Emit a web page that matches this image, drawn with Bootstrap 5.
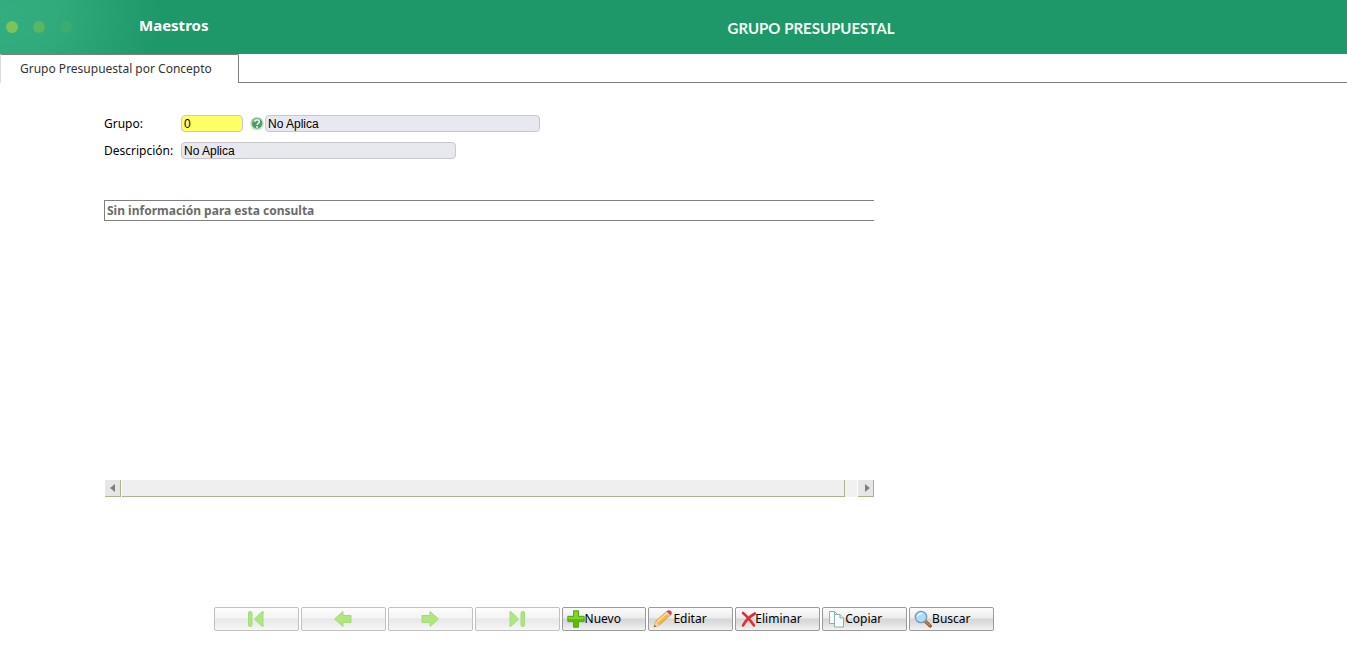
<!DOCTYPE html>
<html lang="es">
<head>
<meta charset="utf-8">
<meta name="viewport" content="width=device-width, initial-scale=1">
<title>Grupo Presupuestal</title>
<link href="https://cdn.jsdelivr.net/npm/bootstrap@5.3.0/dist/css/bootstrap.min.css" rel="stylesheet">
<style>
  body { font-family: "Noto Sans", sans-serif; font-size: 12px; line-height: 16px; color: #000; background: #fff; }
  .app-header { height: 54px; background: radial-gradient(ellipse 160px 110px at 0 16px, #34ae80 0, #30a97b 40%, #1e9868 100%) #1e9868; color: #fff; }
  .dots { width: 139px; gap: 15px; padding-left: 6px; }
  .dots span { width: 12px; height: 12px; border-radius: 50%; background: #7cc35a; }
  .dots span:nth-child(2) { background: #58b665; }
  .dots span:nth-child(3) { background: #3cac70; }
  .module-name { font-size: 15px; line-height: 20px; font-weight: 700; width: 136px; margin: 0 0 4px; }
  .page-title { font-family: Lato, sans-serif; font-size: 15px; line-height: 20px; font-weight: 700; margin: 2px 0 0; color: #f4fcf7; }
  .page-tabs { height: 29px; border-bottom: 1px solid #808080; }
  .page-tabs .nav-link { height: 29px; width: 239px; padding: 0 0 0 19px; border: 1px solid #808080; border-left-color: #ddd; border-bottom: 0; border-radius: 0 2px 0 0; background: #fff; color: #333; font-size: 12px; line-height: 16px; text-align: left; white-space: nowrap; }
  .workspace { padding: 32px 0 0 104px; }
  .field-label { width: 77px; font-size: 12px; }
  .field-row { height: 17px; }
  .field { height: 17px; padding: 0 2px; border: 1px solid #c8c8c8; border-radius: 4px; background: #e8e8f1; color: #000; font: 12px/15px "Liberation Sans", sans-serif; }
  .field-code { width: 62px; background: #ffff66; }
  .field-text { width: 275px; }
  .help-btn { width: 14px; height: 15px; margin: 0 1px 0 7px; }
  .result-panel { max-width: 770px; height: 297px; margin-top: 41px; }
  .no-data { height: 21px; border: 1px solid #808080; border-right: 0; color: #6b6b6b; font-weight: 700; padding: 2px; line-height: 16px; }
  .scroller { height: 17px; padding-left: 1px; }
  .scroll-arrow { width: 16px; background: #e6e6e6; border: 0; border-right: 1px solid #a8b48c; border-bottom: 1px solid #a8b48c; padding: 0; }
  .scroll-thumb { background: #efefef; border-right: 1px solid #a8b48c; border-bottom: 1px solid #a8b48c; margin-left: 1px; }
  .scroll-rest { width: 12px; background: #f1f1f1; margin-right: 1px; }
  .result-panel { margin-top: 41px; }
  form { padding-bottom: 2px; }
  .toolbar { display: grid; grid-template-columns: repeat(9, minmax(0, 1fr)); max-width: 780px; margin: 110px 0 0 110px; gap: 2px; }
  .tool-btn { height: 24px; min-width: 0; padding: 0 0 0 4px; border: 1px solid #9a9a9a; border-radius: 2px; color: #000; background: linear-gradient(#fdfdfd 0, #ececec 45%, #d6d6d6 50%, #dedede 70%, #f3f3f3 100%); font-size: 12px; line-height: 20px; white-space: nowrap; }
  .tool-btn:disabled { opacity: .55; padding: 0; border-color: #8f8f8f; }
  .tool-btn svg, .help-btn svg, .scroll-arrow svg { display: block; flex: none; }
</style>
</head>
<body>
<header class="app-header d-flex align-items-center">
  <div class="dots d-flex flex-shrink-0" aria-hidden="true"><span></span><span></span><span></span></div>
  <p class="module-name">Maestros</p>
  <h1 class="page-title flex-fill text-center">GRUPO PRESUPUESTAL</h1>
</header>
<nav class="page-tabs nav" role="tablist">
  <button class="nav-link active" type="button" role="tab" aria-selected="true">Grupo Presupuestal por Concepto</button>
</nav>
<main class="workspace">
  <form>
    <div class="field-row d-flex align-items-center">
      <label class="field-label" for="grupo">Grupo:</label>
      <input class="field field-code" id="grupo" type="text" value="0">
      <button class="help-btn btn p-0 border-0" type="button" aria-label="Ayuda">
        <svg width="14" height="15" viewBox="0 0 14 15"><circle cx="7" cy="7.5" r="6.8" fill="#c5d9cb"/><circle cx="7" cy="7.3" r="5.6" fill="#4b9c65" stroke="#edf6ef" stroke-width=".5"/><path d="M2 7a5 5 0 0 1 9-3Q7 4 2 7" fill="#82bd93"/><path d="M4.9 5.7Q5.2 3.9 7.2 3.9T9.3 5.8Q9.3 7 8 7.6Q7.1 8 7.1 9" fill="none" stroke="#fff" stroke-width="1.4"/><circle cx="7" cy="11" r=".9" fill="#fff"/></svg>
      </button>
      <input class="field field-text" type="text" value="No Aplica" aria-label="Nombre del grupo" readonly>
    </div>
    <div class="field-row d-flex align-items-center mt-2 pt-1">
      <label class="field-label" for="descripcion">Descripción:</label>
      <input class="field field-text" id="descripcion" type="text" value="No Aplica" readonly>
    </div>
  </form>
  <section class="result-panel d-flex flex-column justify-content-between">
    <div class="no-data">Sin información para esta consulta</div>
    <div class="scroller d-flex">
      <button class="scroll-arrow" type="button" aria-label="Desplazar a la izquierda"><svg width="15" height="16" viewBox="0 0 15 16"><path d="M10 4v8L5 8z" fill="#808080"/></svg></button>
      <div class="scroll-thumb flex-fill"></div>
      <div class="scroll-rest"></div>
      <button class="scroll-arrow" type="button" aria-label="Desplazar a la derecha"><svg width="15" height="16" viewBox="0 0 15 16"><path d="M7 4v8l5-4z" fill="#808080"/></svg></button>
    </div>
  </section>
  <div class="toolbar" role="toolbar" aria-label="Acciones">
    <button class="tool-btn btn d-flex align-items-center justify-content-center" type="button" aria-label="Primero" disabled><svg width="20" height="20" viewBox="0 0 20 20" fill="#6fd315" stroke="#5bbd12"><rect x="2.5" y="2.5" width="3.500" height="15" rx="1.5"/><path d="M8.500 10l6-6q1.500-2 3-1-1 2-.5 4v6q-.5 2 .5 4-1.500 1-3-1z"/></svg></button>
    <button class="tool-btn btn d-flex align-items-center justify-content-center" type="button" aria-label="Anterior" disabled><svg width="20" height="20" viewBox="0 0 20 20" fill="#6fd315" stroke="#5bbd12"><path d="M1.500 10L10 2.500V6.500h8v7h-8v4z" stroke-linejoin="round"/></svg></button>
    <button class="tool-btn btn d-flex align-items-center justify-content-center" type="button" aria-label="Siguiente" disabled><svg width="20" height="20" viewBox="0 0 20 20" fill="#6fd315" stroke="#5bbd12"><path d="M18.500 10L10 2.500V6.500H2v7h8v4z" stroke-linejoin="round"/></svg></button>
    <button class="tool-btn btn d-flex align-items-center justify-content-center" type="button" aria-label="Último" disabled><svg width="20" height="20" viewBox="0 0 20 20" fill="#6fd315" stroke="#5bbd12"><rect x="14" y="2.500" width="3.500" height="15" rx="1.500"/><path d="M11.500 10l-6-6q-1.500-2-3-1 1 2 .5 4v6q.5 2-.5 4 1.500 1 3-1z"/></svg></button>
    <button class="tool-btn btn d-flex align-items-center" type="button"><svg width="18" height="18" viewBox="0 0 18 18"><path d="M6.500.8h5v5.500h5.700v5.400h-5.700v5.500h-5v-5.500H.8V6.300h5.700z" fill="#62b90c" stroke="#53a80d" stroke-linejoin="round"/><path d="M7 1.500h4v5.500h5.500v2h-15V7H7z" fill="#83d32d"/></svg>Nuevo</button>
    <button class="tool-btn btn d-flex align-items-center" type="button"><svg width="20" height="18" viewBox="0 0 20 18"><path d="M1 17l1.500-5.500L14 1l4 3.500L6.500 15z" fill="#f5b849" stroke="#ce8932" stroke-width=".7"/><path d="M4 12L14.500 2.500" stroke="#ffe095" stroke-width="1.500"/><path d="M13 2l1.800-1.600q2-.8 3.500 1 1 1.700 0 2.900l-1.700 1.400z" fill="#d9464c"/><path d="M12.300 2.600l1.200-1 3.700 3.500-1.200 1z" fill="#d6dce1"/><path d="M2.500 11.500l4 3.500L1 17z" fill="#efd1a4"/><path d="M1.600 15l1.500 1.300L1 17z" fill="#444"/></svg>Editar</button>
    <button class="tool-btn btn d-flex align-items-center" type="button"><svg width="15" height="18" viewBox="0 0 15 18" overflow="visible"><path d="M3 3q5 4 11 12.500M15 3.500Q7 8 3 15.500" fill="none" stroke="#e12d30" stroke-width="2.600" stroke-linecap="round"/></svg>Eliminar</button>
    <button class="tool-btn btn d-flex align-items-center" type="button"><svg width="18" height="18" viewBox="0 0 18 18" fill="#f6fbfc" stroke="#87a5aa" stroke-width=".9"><path d="M2.500 1.500h5l3 3v9h-8z"/><path d="M7.500 4.500h5.500l3.500 3.500v9h-9z"/><path d="M13 4.500V8h3.500M7.500 1.500v3" fill="#d7e7ea"/></svg>Copiar</button>
    <button class="tool-btn btn d-flex align-items-center" type="button"><svg width="18" height="18" viewBox="0 0 18 18"><path d="M11 11l5.300 5" stroke="#8b5c35" stroke-width="3.200" stroke-linecap="round"/><path d="M11 11l5 4.500" stroke="#c18d5a" stroke-width="1.200"/><circle cx="7" cy="7" r="5.700" fill="#acdcf7" stroke="#759bb7" stroke-width="1.300"/><path d="M3 7a4 4 0 0 1 6-3.500Q5 4.500 3 7" fill="#eefaff"/></svg>Buscar</button>
  </div>
</main>
<script src="https://cdn.jsdelivr.net/npm/bootstrap@5.3.0/dist/js/bootstrap.bundle.min.js"></script>
</body>
</html>
